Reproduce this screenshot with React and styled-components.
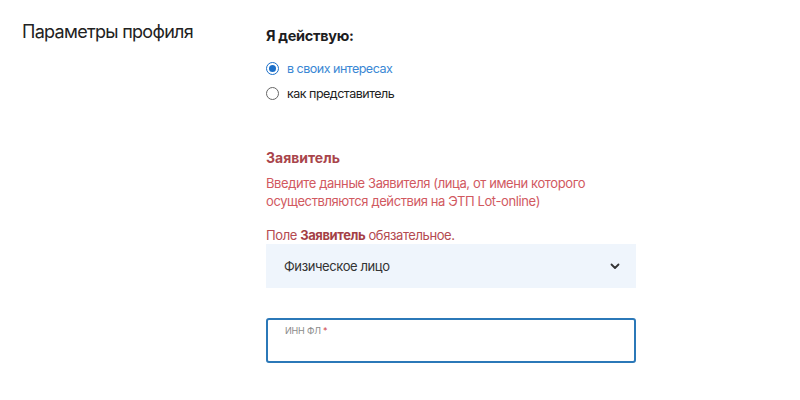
import React, { useState } from 'react';
import styled, { createGlobalStyle } from 'styled-components';

const GlobalStyle = createGlobalStyle`
    body {
        margin: 0;
        background: #fff;
        font-family: Inter, "Noto Sans", sans-serif;
        color: #1d1d1f;
    }
`;

const Page = styled.div`
    display: flex;
    width: 800px;
    height: 400px;
    padding: 20px 0 0 22px;
    box-sizing: border-box;
`;

const SideTitle = styled.h1`
    width: 244px;
    margin: 0;
    font-size: 18px;
    font-weight: 400;
    line-height: 24px;
    letter-spacing: -0.7px;
    color: #222;
`;

const Form = styled.div`
    display: flex;
    flex-direction: column;
    width: 370px;
`;

const Label = styled.div`
    margin-top: 4px;
    font-size: 14.5px;
    font-weight: 700;
    line-height: 24px;
    letter-spacing: -0.3px;
`;

const RadioGroup = styled.div`
    display: flex;
    flex-direction: column;
    gap: 7px;
    margin-top: 11px;
`;

const RadioRow = styled.label`
    display: flex;
    align-items: center;
    gap: 8px;
    height: 18px;
    font-size: 12.5px;
    letter-spacing: -0.5px;
    color: ${p => (p.$checked ? '#3a87d4' : '#222')};
    cursor: pointer;
`;

const RadioDot = styled.span`
    width: 13px;
    height: 13px;
    border-radius: 50%;
    box-sizing: border-box;
    border: 1.5px solid ${p => (p.$checked ? '#1b6fc9' : '#666')};
    display: flex;
    align-items: center;
    justify-content: center;
    &::after {
        content: '';
        width: 7px;
        height: 7px;
        border-radius: 50%;
        background: ${p => (p.$checked ? '#1b6fc9' : 'transparent')};
    }
`;

const SectionTitle = styled.div`
    margin-top: 46px;
    font-size: 14px;
    font-weight: 700;
    line-height: 20px;
    color: #a9454b;
`;

const Hint = styled.p`
    margin: 6px 0 0;
    font-size: 13px;
    line-height: 18px;
    letter-spacing: -0.4px;
    color: #d1595f;
`;

const Required = styled.p`
    margin: 16px 0 0;
    font-size: 13px;
    line-height: 18px;
    letter-spacing: -0.4px;
    color: #b44a50;
    b {
        font-weight: 700;
        color: #a43f45;
    }
`;

const Select = styled.div`
    display: flex;
    align-items: center;
    justify-content: space-between;
    height: 44px;
    padding: 0 16px 0 18px;
    background: #eff5fc;
    font-size: 13px;
    letter-spacing: -0.4px;
    color: #333;
    box-sizing: border-box;
`;

const Field = styled.div`
    height: 45px;
    margin-top: 30px;
    padding: 5px 17px 0;
    border: 2px solid #2b78b8;
    border-radius: 3px;
    box-sizing: border-box;
`;

const FieldLabel = styled.div`
    font-size: 9px;
    line-height: 12px;
    letter-spacing: -0.2px;
    color: #8a8a8a;
    span {
        color: #d0464d;
    }
`;

export default function App() {
    const [mode, setMode] = useState('self');

    return (
        <>
            <GlobalStyle />
            <Page>
                <SideTitle>Параметры профиля</SideTitle>
                <Form>
                    <Label>Я действую:</Label>
                    <RadioGroup>
                        <RadioRow $checked={mode === 'self'} onClick={() => setMode('self')}>
                            <RadioDot $checked={mode === 'self'} />
                            в своих интересах
                        </RadioRow>
                        <RadioRow $checked={mode === 'agent'} onClick={() => setMode('agent')}>
                            <RadioDot $checked={mode === 'agent'} />
                            как представитель
                        </RadioRow>
                    </RadioGroup>
                    <SectionTitle>Заявитель</SectionTitle>
                    <Hint>
                        Введите данные Заявителя (лица, от имени которого<br />
                        осуществляются действия на ЭТП Lot-online)
                    </Hint>
                    <Required>Поле <b>Заявитель</b> обязательное.</Required>
                    <Select>
                        Физическое лицо
                        <svg width="10" height="7" viewBox="0 0 10 7">
                            <path d="M1.5 1.5 L5 5 L8.5 1.5" fill="none" stroke="#333" strokeWidth="1.8" strokeLinecap="round" strokeLinejoin="round" />
                        </svg>
                    </Select>
                    <Field>
                        <FieldLabel>ИНН ФЛ <span>*</span></FieldLabel>
                    </Field>
                </Form>
            </Page>
        </>
    );
}
